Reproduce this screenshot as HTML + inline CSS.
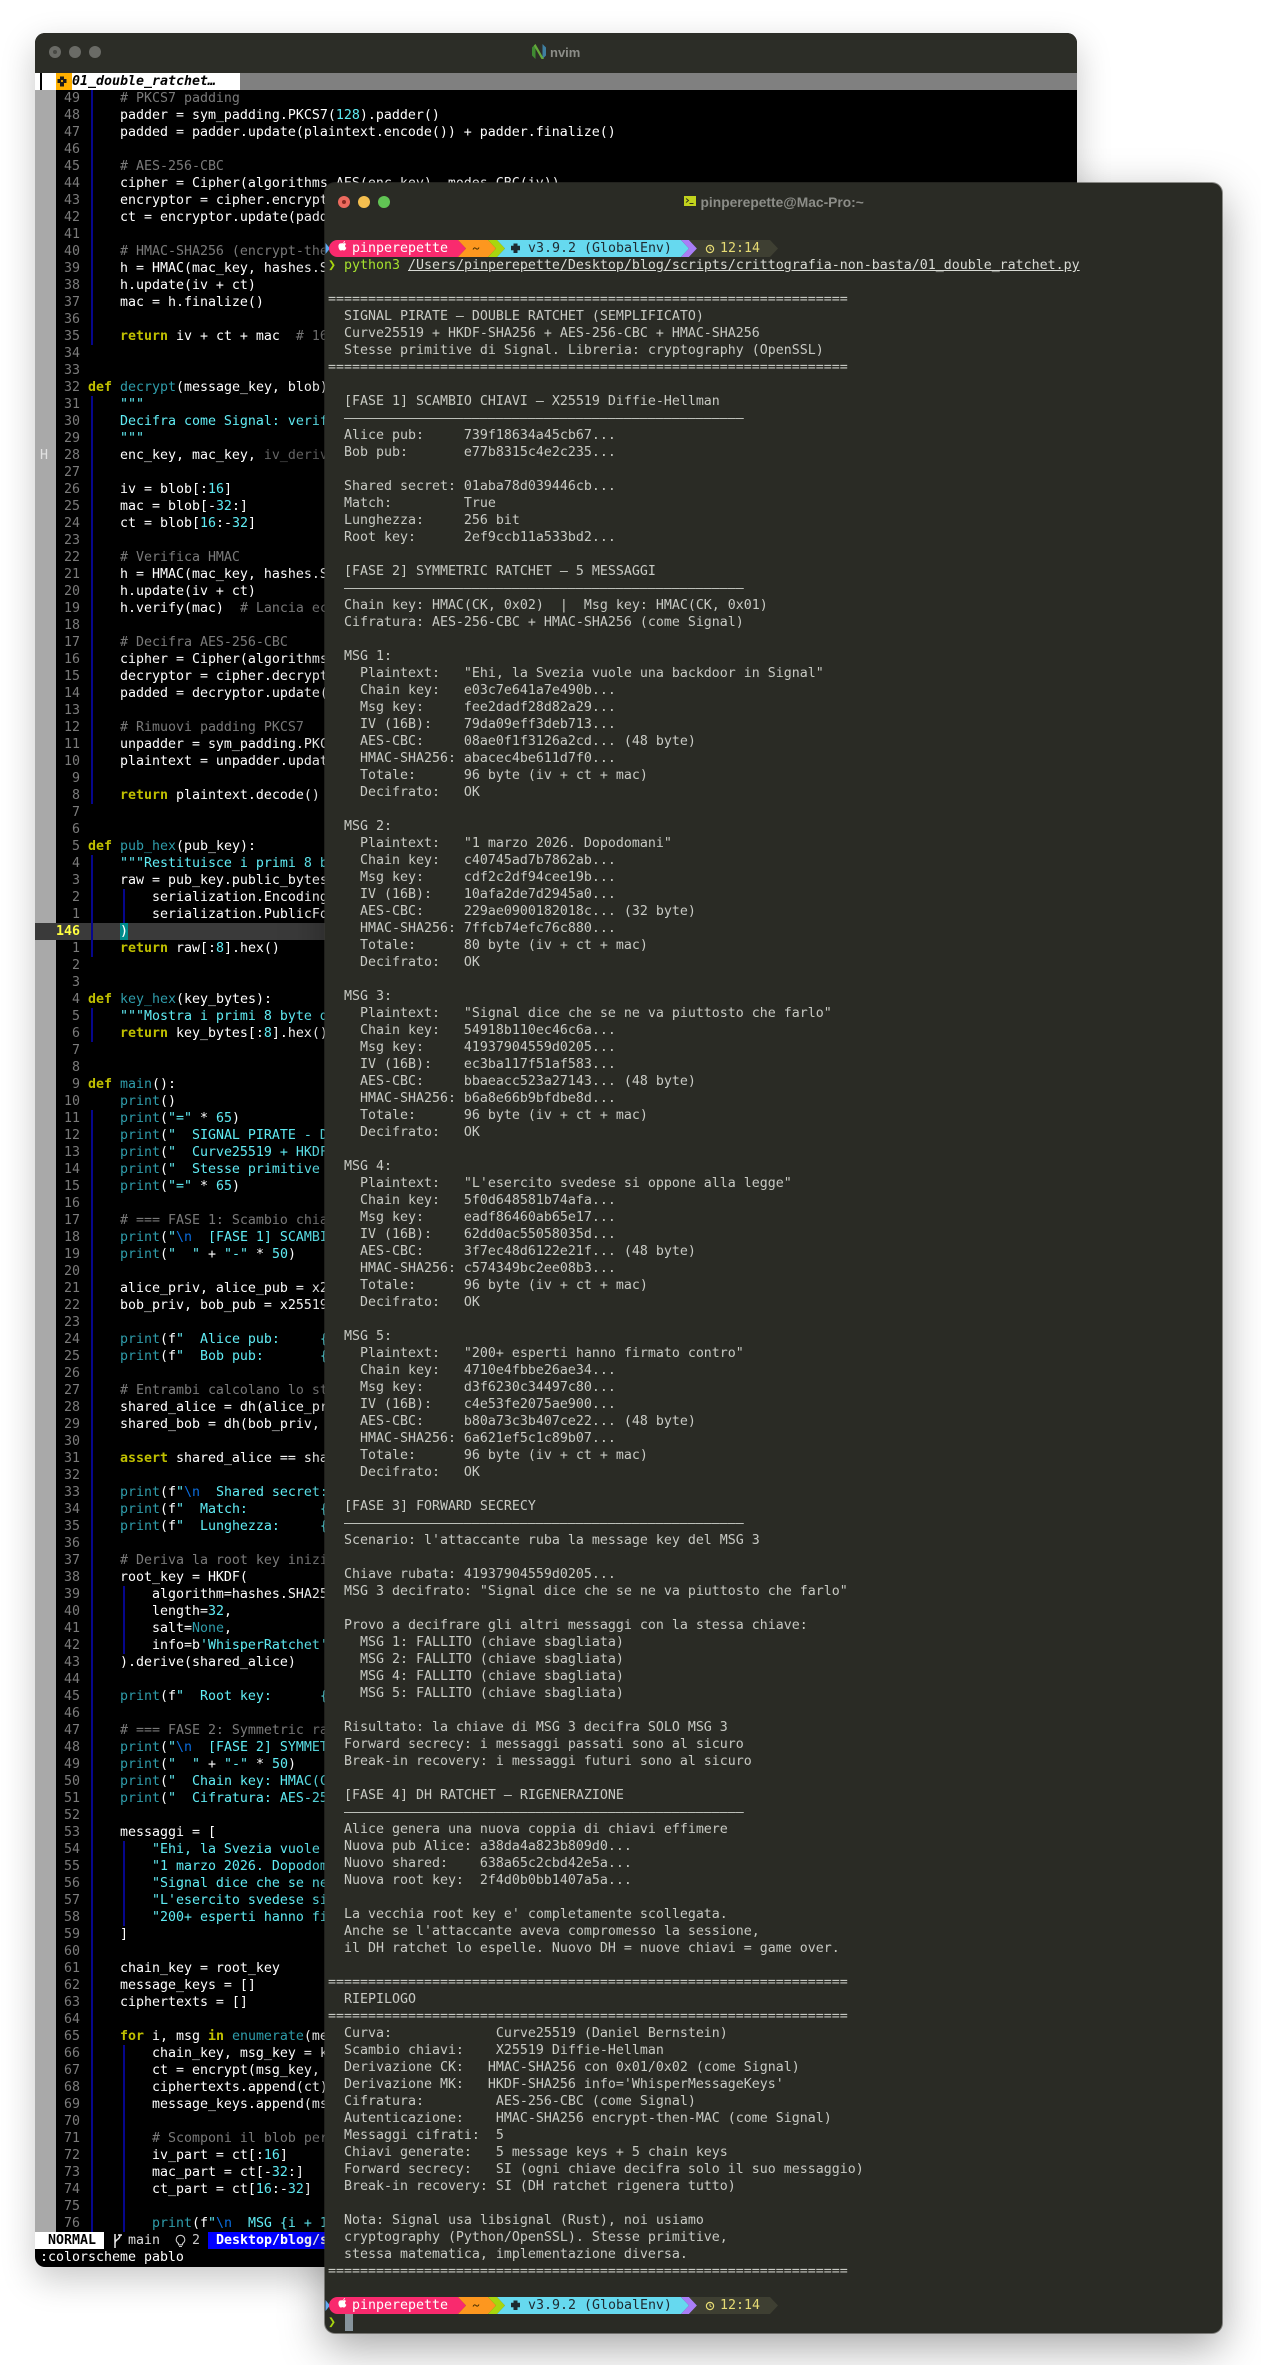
<!DOCTYPE html>
<html><head><meta charset="utf-8"><title>nvim and terminal</title>
<style>
html,body{margin:0;padding:0;background:#fff;width:1261px;height:2365px;overflow:hidden}
*{box-sizing:border-box}
.a{position:absolute}
pre{margin:0;font-family:"DejaVu Sans Mono","Liberation Mono",monospace;font-size:13.29px;line-height:17px;white-space:pre;filter:blur(.25px)}
#nv{left:35px;top:33px;width:1042px;height:2234px;background:#000;border-radius:10px;overflow:hidden;box-shadow:0 12px 34px rgba(0,0,0,.22)}
#nvt{left:0;top:0;width:1042px;height:40px;background:#2c2d27}
.dot{width:12px;height:12px;border-radius:50%}
.wt{font:bold 13px "Liberation Sans",sans-serif;color:#8c8d88}
#tab{left:0;top:40px;width:1042px;height:17px;background:#808080}
#sign{left:0;top:57px;width:21px;height:2142px;background:#a9a9a9}
#cur{left:0;top:890px;width:1042px;height:17px;background:#3a3a3a}
.g{width:2px;background:#06068c}
#code{left:53px;top:57px;color:#fff}
#num{left:21px;top:57px;width:24px;text-align:right;color:#7b7b7b}
b.k{color:#c0c000;font-weight:bold}
i{font-style:normal}
.f{color:#2f9dab}.s{color:#60ecf4}.n{color:#60ecf4}.c{color:#7a7a7a}.e{color:#0a6ee0}.h{color:#666}.ff{color:#fff}
#st{left:0;top:2199px;height:17px;width:1042px;background:#000;color:#fff}
#term{left:324.5px;top:183px;width:897.5px;height:2150px;background:#2a2b25;border-radius:10px;box-shadow:0 14px 44px rgba(0,0,0,.36),0 0 0 1px rgba(70,70,62,.55);overflow:hidden}
#tx{left:3.5px;top:57px;color:#c8cac4}
.seg{height:17px}
</style></head><body>

<div class="a" id="nv">
 <div class="a" id="nvt"></div>
 <div class="a dot" style="left:14px;top:13px;background:#6a6b66"></div>
 <div class="a" style="left:18px;top:17px;width:4px;height:4px;border-radius:50%;background:#474843"></div>
 <div class="a dot" style="left:34px;top:13px;background:#6a6b66"></div>
 <div class="a dot" style="left:54px;top:13px;background:#6a6b66"></div>
 <svg class="a" style="left:496px;top:10px" width="16" height="17" viewBox="0 0 16 17">
  <path d="M1 4.5 4.5 1v15L1 12.5z" fill="#3f8a32"/><path d="M11.5 1 15 4.5v8L11.5 16z" fill="#3f7fa0"/><path d="M4.5 1 13 16h-2.5L2.8 2.6z" fill="#66a83a"/>
 </svg>
 <div class="a wt" style="left:515px;top:12px">nvim</div>

 <div class="a" id="tab"></div>
 <div class="a" style="left:0;top:40px;width:205px;height:17px;background:#fff"></div>
 <div class="a" style="left:5px;top:40px;width:2px;height:17px;background:#000"></div>
 <div class="a" style="left:21px;top:40px;width:16px;height:17px;background:#ffb000"></div>
 <svg class="a" style="left:22px;top:43px" width="10" height="11" viewBox="0 0 10 11"><path d="M3 .5h4v2.5h2.5v4H7v3.500H3V7H.5V3H3z" fill="#1a1a1a"/><circle cx="5" cy="5" r="1.100" fill="#ffb000"/></svg>
 <pre class="a" style="left:37px;top:40px;color:#000;font-weight:bold;font-style:italic">01_double_ratchet…</pre>

 <div class="a" id="sign"></div>
 <div class="a" id="cur"></div>
 <pre class="a" style="left:5px;top:414px;color:#e2e2e2">H</pre>

 <!-- indent guides -->
 <div class="a g" style="left:56px;top:57px;height:255px"></div>
 <div class="a g" style="left:56px;top:363px;height:408px"></div>
 <div class="a g" style="left:56px;top:822px;height:102px"></div>
 <div class="a g" style="left:56px;top:975px;height:34px"></div>
 <div class="a g" style="left:56px;top:1077px;height:1122px"></div>
 <div class="a g" style="left:88px;top:856px;height:34px"></div>
 <div class="a g" style="left:88px;top:1553px;height:68px"></div>
 <div class="a g" style="left:88px;top:1808px;height:85px"></div>
 <div class="a g" style="left:88px;top:2012px;height:187px"></div>

 <div class="a" style="left:85px;top:890px;width:8px;height:17px;background:#008b8b"></div>

<pre class="a" id="num">49
48
47
46
45
44
43
42
41
40
39
38
37
36
35
34
33
32
31
30
29
28
27
26
25
24
23
22
21
20
19
18
17
16
15
14
13
12
11
10
9
8
7
6
5
4
3
2
1
<b style="color:#ffff40">146</b>
1
2
3
4
5
6
7
8
9
10
11
12
13
14
15
16
17
18
19
20
21
22
23
24
25
26
27
28
29
30
31
32
33
34
35
36
37
38
39
40
41
42
43
44
45
46
47
48
49
50
51
52
53
54
55
56
57
58
59
60
61
62
63
64
65
66
67
68
69
70
71
72
73
74
75
76</pre>

<pre class="a" id="code">    <i class="c"># PKCS7 padding</i>
    padder = sym_padding.PKCS7(<i class="n">128</i>).padder()
    padded = padder.update(plaintext.encode()) + padder.finalize()

    <i class="c"># AES-256-CBC</i>
    cipher = Cipher(algorithms.AES(enc_key), modes.CBC(iv))
    encryptor = cipher.encryptor()
    ct = encryptor.update(padded)
 
    <i class="c"># HMAC-SHA256 (encrypt-then-MAC)</i>
    h = HMAC(mac_key, hashes.SHA256())
    h.update(iv + ct)
    mac = h.finalize()

    <b class="k">return</b> iv + ct + mac  <i class="c"># 16</i>


<b class="k">def</b> <i class="f">decrypt</i>(message_key, blob):
    <i class="s">"""</i>
    <i class="s">Decifra come Signal: verifica</i>
    <i class="s">"""</i>
    enc_key, mac_key, <i class="h">iv_derived</i>

    iv = blob[:<i class="n">16</i>]
    mac = blob[-<i class="n">32</i>:]
    ct = blob[<i class="n">16</i>:-<i class="n">32</i>]

    <i class="c"># Verifica HMAC</i>
    h = HMAC(mac_key, hashes.SHA256())
    h.update(iv + ct)
    h.verify(mac)  <i class="c"># Lancia eccezione</i>

    <i class="c"># Decifra AES-256-CBC</i>
    cipher = Cipher(algorithms.AES
    decryptor = cipher.decryptor()
    padded = decryptor.update(ct)

    <i class="c"># Rimuovi padding PKCS7</i>
    unpadder = sym_padding.PKCS7(<i class="n">128</i>)
    plaintext = unpadder.update(padded)

    <b class="k">return</b> plaintext.decode()


<b class="k">def</b> <i class="f">pub_hex</i>(pub_key):
    <i class="s">"""Restituisce i primi 8 byte</i>
    raw = pub_key.public_bytes(
        serialization.Encoding.Raw,
        serialization.PublicFormat.Raw,
    )
    <b class="k">return</b> raw[:<i class="n">8</i>].hex()


<b class="k">def</b> <i class="f">key_hex</i>(key_bytes):
    <i class="s">"""Mostra i primi 8 byte di una</i>
    <b class="k">return</b> key_bytes[:<i class="n">8</i>].hex()


<b class="k">def</b> <i class="f">main</i>():
    <i class="f">print</i>()
    <i class="f">print</i>(<i class="s">"="</i> * <i class="n">65</i>)
    <i class="f">print</i>(<i class="s">"  SIGNAL PIRATE - DOUBLE RATCHET</i>
    <i class="f">print</i>(<i class="s">"  Curve25519 + HKDF-SHA256 + AES</i>
    <i class="f">print</i>(<i class="s">"  Stesse primitive di Signal.</i>
    <i class="f">print</i>(<i class="s">"="</i> * <i class="n">65</i>)

    <i class="c"># === FASE 1: Scambio chiavi</i>
    <i class="f">print</i>(<i class="s">"</i><i class="e">\n</i><i class="s">  [FASE 1] SCAMBIO CHIAVI</i>
    <i class="f">print</i>(<i class="s">"  "</i> + <i class="s">"-"</i> * <i class="n">50</i>)

    alice_priv, alice_pub = x25519_keygen()
    bob_priv, bob_pub = x25519_keygen()

    <i class="f">print</i>(f<i class="s">"  Alice pub:     {</i>
    <i class="f">print</i>(f<i class="s">"  Bob pub:       {</i>

    <i class="c"># Entrambi calcolano lo stesso</i>
    shared_alice = dh(alice_priv, bob_pub)
    shared_bob = dh(bob_priv, alice_pub)

    <b class="k">assert</b> shared_alice == shared_bob

    <i class="f">print</i>(f<i class="s">"</i><i class="e">\n</i><i class="s">  Shared secret: {</i>
    <i class="f">print</i>(f<i class="s">"  Match:         {</i>
    <i class="f">print</i>(f<i class="s">"  Lunghezza:     {</i>

    <i class="c"># Deriva la root key iniziale</i>
    root_key = HKDF(
        algorithm=hashes.SHA256(),
        length=<i class="n">32</i>,
        salt=<i class="f">None</i>,
        info=b<i class="s">'WhisperRatchet'</i>,
    ).derive(shared_alice)

    <i class="f">print</i>(f<i class="s">"  Root key:      {</i>

    <i class="c"># === FASE 2: Symmetric ratchet</i>
    <i class="f">print</i>(<i class="s">"</i><i class="e">\n</i><i class="s">  [FASE 2] SYMMETRIC</i>
    <i class="f">print</i>(<i class="s">"  "</i> + <i class="s">"-"</i> * <i class="n">50</i>)
    <i class="f">print</i>(<i class="s">"  Chain key: HMAC(CK, 0x02)</i>
    <i class="f">print</i>(<i class="s">"  Cifratura: AES-256-CBC</i>

    messaggi = [
        <i class="s">"Ehi, la Svezia vuole una</i>
        <i class="s">"1 marzo 2026. Dopodomani"</i>,
        <i class="s">"Signal dice che se ne va</i>
        <i class="s">"L'esercito svedese si oppone</i>
        <i class="s">"200+ esperti hanno firmato</i>
    ]

    chain_key = root_key
    message_keys = []
    ciphertexts = []

    <b class="k">for</b> i, msg <b class="k">in</b> <i class="f">enumerate</i>(messaggi):
        chain_key, msg_key = kdf_chain(
        ct = encrypt(msg_key, msg)
        ciphertexts.append(ct)
        message_keys.append(msg_key)

        <i class="c"># Scomponi il blob per</i>
        iv_part = ct[:<i class="n">16</i>]
        mac_part = ct[-<i class="n">32</i>:]
        ct_part = ct[<i class="n">16</i>:-<i class="n">32</i>]

        <i class="f">print</i>(f<i class="s">"</i><i class="e">\n</i><i class="s">  MSG {i + 1</i></pre>
 <pre class="a" style="left:85px;top:890px;color:#fff;width:8px;height:17px">)</pre>

 <div class="a" id="st"></div>
 <div class="a" style="left:0;top:2199px;width:69px;height:17px;background:#fff"></div>
 <pre class="a" style="left:13px;top:2199px;color:#000;font-weight:bold">NORMAL</pre>
 <svg class="a" style="left:77px;top:2200px" width="10" height="16" viewBox="0 0 10 16"><path d="M3 1v14M8 2.500c0 4-5 4-5 7.500" fill="none" stroke="#eee" stroke-width="1.500"/><path d="M6 2h4" stroke="#eee" stroke-width="1.500"/></svg>
 <pre class="a" style="left:93px;top:2199px;color:#ddd">main</pre>
 <svg class="a" style="left:140px;top:2201px" width="11" height="14" viewBox="0 0 11 14"><path d="M3.500 9.500C2 8.500 1.200 7.200 1.200 5.600a4.300 4.300 0 0 1 8.600 0c0 1.600-.8 2.900-2.300 3.900v1.300h-4zM4 12.500h3" fill="none" stroke="#c9c9c9" stroke-width="1.100"/></svg>
 <pre class="a" style="left:157px;top:2199px;color:#c9c9c9">2</pre>
 <div class="a" style="left:173px;top:2199px;width:300px;height:17px;background:#0000ff"></div>
 <pre class="a" style="left:181px;top:2199px;color:#fff;font-weight:bold">Desktop/blog/scripts/critto</pre>
 <pre class="a" style="left:5px;top:2216px;color:#fff">:colorscheme pablo</pre>
</div>

<div class="a" id="term">
 <div class="a dot" style="left:13.500px;top:13px;background:#ec6a5e"></div>
 <div class="a" style="left:17.500px;top:17px;width:4px;height:4px;border-radius:50%;background:#8a2a22"></div>
 <div class="a dot" style="left:33.500px;top:13px;background:#f5bf4f"></div>
 <div class="a dot" style="left:53.500px;top:13px;background:#61c554"></div>
 <svg class="a" style="left:359px;top:13px" width="12" height="11" viewBox="0 0 12 11"><rect width="12" height="10" fill="#c2d31d"/><path d="M2 2.500 4.500 4.500 2 6.500" fill="none" stroke="#33351a" stroke-width="1"/><path d="M5.500 7.500h4" stroke="#33351a" stroke-width="1"/></svg>
 <div class="a wt" style="left:376px;top:12px;font-size:13.800px">pinperepette@Mac-Pro:~</div>

 <!-- first prompt -->
 <svg class="a" style="left:0;top:57px" width="460" height="17" viewBox="0 0 460 17">
  <path d="M.5 3 5 8.500.5 14z" fill="#5fa8ef"/>
  <path d="M12.500 0H133l8 8.500-8 8.500H12.500a8.500 8.500 0 0 1 0-17z" fill="#f92a6e"/>
  <path d="M133 0h30l8 8.500-8 8.500h-30l8-8.500z" fill="#fd971f"/>
  <path d="M163 0h9l8 8.500-8 8.500h-9l8-8.500z" fill="#a8d60e"/>
  <path d="M172 0h184l8 8.500-8 8.500H172l8-8.500z" fill="#66d9ef"/>
  <path d="M356 0h8l8 8.500-8 8.500h-8l8-8.500z" fill="#a97ef7"/>
  <path d="M364 0h81l8 8.500-8 8.500h-81l8-8.500z" fill="#3e3f32"/>
  <path d="M16 3.500c1-.5 1.500-.5 2.300 0 .8-.5 2-.6 2.800.6-1.500 1-1.300 3 .3 3.700-.5 1.300-1.300 2.700-2.300 2.700-.8 0-1-.4-1.700-.4-.8 0-1 .4-1.700.4-1.500 0-3.200-4.500-1.700-6.300.6-.7 1.300-.9 2-.7zM18.300 3c0-1 .7-1.800 1.700-2 .1 1-.7 2-1.700 2z" fill="#fff"/>
  <path d="M148 9.500c1-2 2-2 3-1s2 1 3-1" fill="none" stroke="#4a3000" stroke-width="1"/>
  <path d="M188.500 3.500h4v2.300h2.500v4.400h-2.500v2.800h-4v-2.800H186V5.800h2.500z" fill="#1e2a30"/>
  <circle cx="385" cy="9" r="3.600" fill="none" stroke="#e6db74" stroke-width="1.200"/>
  <path d="M385 6.800V9l1.500 1" fill="none" stroke="#e6db74" stroke-width="1"/>
 </svg>
 <pre class="a" style="left:27.500px;top:57px;color:#fff;font-weight:500">pinperepette</pre>
 <pre class="a" style="left:203.500px;top:57px;color:#1e2a30">v3.9.2 (GlobalEnv)</pre>
 <pre class="a" style="left:395.500px;top:57px;color:#e6db74">12:14</pre>
 <pre class="a" style="left:3.500px;top:74px"><b style="color:#a8d60e">❯</b> <i style="color:#a6e22e">python3</i> <i style="color:#d8dad4;text-decoration:underline">/Users/pinperepette/Desktop/blog/scripts/crittografia-non-basta/01_double_ratchet.py</i></pre>

<pre class="a" id="tx">



=================================================================
  SIGNAL PIRATE — DOUBLE RATCHET (SEMPLIFICATO)
  Curve25519 + HKDF-SHA256 + AES-256-CBC + HMAC-SHA256
  Stesse primitive di Signal. Libreria: cryptography (OpenSSL)
=================================================================

  [FASE 1] SCAMBIO CHIAVI — X25519 Diffie-Hellman
  ——————————————————————————————————————————————————
  Alice pub:     739f18634a45cb67...
  Bob pub:       e77b8315c4e2c235...

  Shared secret: 01aba78d039446cb...
  Match:         True
  Lunghezza:     256 bit
  Root key:      2ef9ccb11a533bd2...

  [FASE 2] SYMMETRIC RATCHET — 5 MESSAGGI
  ——————————————————————————————————————————————————
  Chain key: HMAC(CK, 0x02)  |  Msg key: HMAC(CK, 0x01)
  Cifratura: AES-256-CBC + HMAC-SHA256 (come Signal)

  MSG 1:
    Plaintext:   "Ehi, la Svezia vuole una backdoor in Signal"
    Chain key:   e03c7e641a7e490b...
    Msg key:     fee2dadf28d82a29...
    IV (16B):    79da09eff3deb713...
    AES-CBC:     08ae0f1f3126a2cd... (48 byte)
    HMAC-SHA256: abacec4be611d7f0...
    Totale:      96 byte (iv + ct + mac)
    Decifrato:   OK

  MSG 2:
    Plaintext:   "1 marzo 2026. Dopodomani"
    Chain key:   c40745ad7b7862ab...
    Msg key:     cdf2c2df94cee19b...
    IV (16B):    10afa2de7d2945a0...
    AES-CBC:     229ae0900182018c... (32 byte)
    HMAC-SHA256: 7ffcb74efc76c880...
    Totale:      80 byte (iv + ct + mac)
    Decifrato:   OK

  MSG 3:
    Plaintext:   "Signal dice che se ne va piuttosto che farlo"
    Chain key:   54918b110ec46c6a...
    Msg key:     41937904559d0205...
    IV (16B):    ec3ba117f51af583...
    AES-CBC:     bbaeacc523a27143... (48 byte)
    HMAC-SHA256: b6a8e66b9bfdbe8d...
    Totale:      96 byte (iv + ct + mac)
    Decifrato:   OK

  MSG 4:
    Plaintext:   "L'esercito svedese si oppone alla legge"
    Chain key:   5f0d648581b74afa...
    Msg key:     eadf86460ab65e17...
    IV (16B):    62dd0ac55058035d...
    AES-CBC:     3f7ec48d6122e21f... (48 byte)
    HMAC-SHA256: c574349bc2ee08b3...
    Totale:      96 byte (iv + ct + mac)
    Decifrato:   OK

  MSG 5:
    Plaintext:   "200+ esperti hanno firmato contro"
    Chain key:   4710e4fbbe26ae34...
    Msg key:     d3f6230c34497c80...
    IV (16B):    c4e53fe2075ae900...
    AES-CBC:     b80a73c3b407ce22... (48 byte)
    HMAC-SHA256: 6a621ef5c1c89b07...
    Totale:      96 byte (iv + ct + mac)
    Decifrato:   OK

  [FASE 3] FORWARD SECRECY
  ——————————————————————————————————————————————————
  Scenario: l'attaccante ruba la message key del MSG 3

  Chiave rubata: 41937904559d0205...
  MSG 3 decifrato: "Signal dice che se ne va piuttosto che farlo"

  Provo a decifrare gli altri messaggi con la stessa chiave:
    MSG 1: FALLITO (chiave sbagliata)
    MSG 2: FALLITO (chiave sbagliata)
    MSG 4: FALLITO (chiave sbagliata)
    MSG 5: FALLITO (chiave sbagliata)

  Risultato: la chiave di MSG 3 decifra SOLO MSG 3
  Forward secrecy: i messaggi passati sono al sicuro
  Break-in recovery: i messaggi futuri sono al sicuro

  [FASE 4] DH RATCHET — RIGENERAZIONE
  ——————————————————————————————————————————————————
  Alice genera una nuova coppia di chiavi effimere
  Nuova pub Alice: a38da4a823b809d0...
  Nuovo shared:    638a65c2cbd42e5a...
  Nuova root key:  2f4d0b0bb1407a5a...

  La vecchia root key e' completamente scollegata.
  Anche se l'attaccante aveva compromesso la sessione,
  il DH ratchet lo espelle. Nuovo DH = nuove chiavi = game over.

=================================================================
  RIEPILOGO
=================================================================
  Curva:             Curve25519 (Daniel Bernstein)
  Scambio chiavi:    X25519 Diffie-Hellman
  Derivazione CK:   HMAC-SHA256 con 0x01/0x02 (come Signal)
  Derivazione MK:   HKDF-SHA256 info='WhisperMessageKeys'
  Cifratura:         AES-256-CBC (come Signal)
  Autenticazione:    HMAC-SHA256 encrypt-then-MAC (come Signal)
  Messaggi cifrati:  5
  Chiavi generate:   5 message keys + 5 chain keys
  Forward secrecy:   SI (ogni chiave decifra solo il suo messaggio)
  Break-in recovery: SI (DH ratchet rigenera tutto)

  Nota: Signal usa libsignal (Rust), noi usiamo
  cryptography (Python/OpenSSL). Stesse primitive,
  stessa matematica, implementazione diversa.
=================================================================</pre>

 <!-- second prompt -->
 <svg class="a" style="left:0;top:2114px" width="460" height="17" viewBox="0 0 460 17">
  <path d="M.5 3 5 8.500.5 14z" fill="#5fa8ef"/>
  <path d="M12.500 0H133l8 8.500-8 8.500H12.500a8.500 8.500 0 0 1 0-17z" fill="#f92a6e"/>
  <path d="M133 0h30l8 8.500-8 8.500h-30l8-8.500z" fill="#fd971f"/>
  <path d="M163 0h9l8 8.500-8 8.500h-9l8-8.500z" fill="#a8d60e"/>
  <path d="M172 0h184l8 8.500-8 8.500H172l8-8.500z" fill="#66d9ef"/>
  <path d="M356 0h8l8 8.500-8 8.500h-8l8-8.500z" fill="#a97ef7"/>
  <path d="M364 0h81l8 8.500-8 8.500h-81l8-8.500z" fill="#3e3f32"/>
  <path d="M16 3.500c1-.5 1.500-.5 2.300 0 .8-.5 2-.6 2.800.6-1.500 1-1.300 3 .3 3.700-.5 1.300-1.300 2.700-2.300 2.700-.8 0-1-.4-1.700-.4-.8 0-1 .4-1.700.4-1.500 0-3.200-4.500-1.700-6.300.6-.7 1.300-.9 2-.7zM18.300 3c0-1 .7-1.800 1.700-2 .1 1-.7 2-1.700 2z" fill="#fff"/>
  <path d="M148 9.500c1-2 2-2 3-1s2 1 3-1" fill="none" stroke="#4a3000" stroke-width="1"/>
  <path d="M188.500 3.500h4v2.300h2.500v4.400h-2.500v2.800h-4v-2.800H186V5.800h2.500z" fill="#1e2a30"/>
  <circle cx="385" cy="9" r="3.600" fill="none" stroke="#e6db74" stroke-width="1.200"/>
  <path d="M385 6.800V9l1.500 1" fill="none" stroke="#e6db74" stroke-width="1"/>
 </svg>
 <pre class="a" style="left:27.500px;top:2114px;color:#fff;font-weight:500">pinperepette</pre>
 <pre class="a" style="left:203.500px;top:2114px;color:#1e2a30">v3.9.2 (GlobalEnv)</pre>
 <pre class="a" style="left:395.500px;top:2114px;color:#e6db74">12:14</pre>
 <pre class="a" style="left:3.500px;top:2131px"><b style="color:#a8d60e">❯</b></pre>
 <div class="a" style="left:20.500px;top:2131px;width:8px;height:17px;background:#87949c"></div>
</div>
</body></html>
